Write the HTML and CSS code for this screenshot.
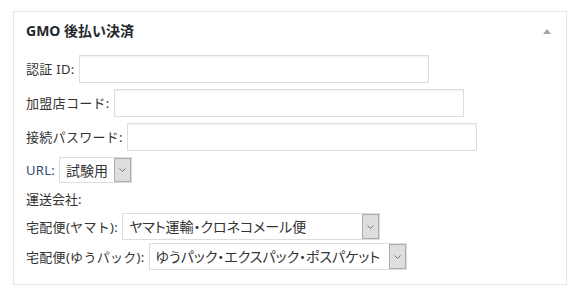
FILE: index.html
```html
<!DOCTYPE html>
<html lang="ja">
<head>
    <meta charset="UTF-8">
    <title>GMO 後払い決済</title>
    <link rel="stylesheet" href="styles.css">
</head>
<body>
    <div class="postbox">
        <div class="hndle">
            <h2>GMO 後払い決済</h2>
            <span class="toggle"></span>
        </div>
        <div class="inside">
            <div class="row">
                <label for="authId">認証 ID:</label>
                <input type="text" id="authId">
            </div>
            <div class="row">
                <label for="shopCode">加盟店コード:</label>
                <input type="text" id="shopCode">
            </div>
            <div class="row">
                <label for="password">接続パスワード:</label>
                <input type="text" id="password">
            </div>
            <div class="row row-url">
                <label for="url" class="url-label">URL:</label>
                <span class="select select-url">
                    <select id="url">
                        <option>試験用</option>
                        <option>本番用</option>
                    </select>
                    <span class="arrow"><svg width="7" height="4" viewBox="0 0 7 4"><path d="M0.5 0.5 L3.5 3.5 L6.5 0.5" fill="none" stroke="#777" stroke-width="1"/></svg></span>
                </span>
            </div>
            <div class="carrier">運送会社:</div>
            <div class="row row-carrier">
                <label for="yamato">宅配便(ヤマト):</label>
                <span class="select select-yamato">
                    <select id="yamato">
                        <option>ヤマト運輸・クロネコメール便</option>
                    </select>
                    <span class="arrow"><svg width="7" height="4" viewBox="0 0 7 4"><path d="M0.5 0.5 L3.5 3.5 L6.5 0.5" fill="none" stroke="#777" stroke-width="1"/></svg></span>
                </span>
            </div>
            <div class="row row-carrier row-last">
                <label for="yupack">宅配便(ゆうパック):</label>
                <span class="select select-yupack">
                    <select id="yupack">
                        <option>ゆうパック・エクスパック・ポスパケット</option>
                    </select>
                    <span class="arrow"><svg width="7" height="4" viewBox="0 0 7 4"><path d="M0.5 0.5 L3.5 3.5 L6.5 0.5" fill="none" stroke="#777" stroke-width="1"/></svg></span>
                </span>
            </div>
        </div>
    </div>
</body>
</html>
```

FILE: styles.css
```css
body {
    margin: 0;
    background: #fff;
    font-family: "Noto Sans", "Noto Sans CJK JP", sans-serif;
    color: #333;
}
.postbox {
    margin: 11px 0 0 13px;
    width: 554px;
    box-sizing: border-box;
    border: 1px solid #e5e5e5;
    background: #fff;
}
.hndle {
    display: flex;
    justify-content: space-between;
    align-items: center;
    padding: 9px 12px 0 12px;
}
.hndle h2 {
    margin: 0;
    font-size: 14px;
    line-height: 20px;
    font-weight: bold;
    color: #23282d;
}
.toggle {
    width: 0;
    height: 0;
    border-left: 4px solid transparent;
    border-right: 4px solid transparent;
    border-bottom: 5px solid #a0a5aa;
    margin-right: 3px;
}
.inside {
    padding: 14px 12px 14px 12px;
    font-size: 13px;
}
.row {
    display: flex;
    align-items: center;
    margin-bottom: 6px;
}
.row label {
    margin-right: 4px;
    line-height: 20px;
    letter-spacing: 0.3px;
}
.row input {
    width: 350px;
    height: 28px;
    box-sizing: border-box;
    border: 1px solid #ddd;
    box-shadow: inset 0 1px 2px rgba(0,0,0,0.07);
    margin: 0;
}
.url-label {
    color: #2f4a73;
}
.select {
    display: inline-flex;
    box-sizing: border-box;
    border: 1px solid #ddd;
    background: #fff;
}
.select select {
    appearance: none;
    -webkit-appearance: none;
    border: none;
    background: transparent;
    font-family: inherit;
    font-size: 14px;
    font-feature-settings: "palt";
    color: #333;
    padding: 0 0 0 6px;
    margin: 0;
    flex: 1;
    outline: none;
}
.select .arrow {
    width: 17px;
    box-sizing: border-box;
    border: 1px solid #acacac;
    background: #dedede;
    display: flex;
    align-items: center;
    justify-content: center;
}
.select-url {
    width: 73px;
    height: 26px;
}
.select-yamato {
    width: 258px;
    height: 27px;
}
.select-yupack {
    width: 258px;
    height: 27px;
}
.carrier {
    margin-top: 5px;
    line-height: 20px;
}
.row-carrier {
    margin-top: 4px;
    margin-bottom: 0;
}
.row-last {
    margin-top: 3px;
}
```
